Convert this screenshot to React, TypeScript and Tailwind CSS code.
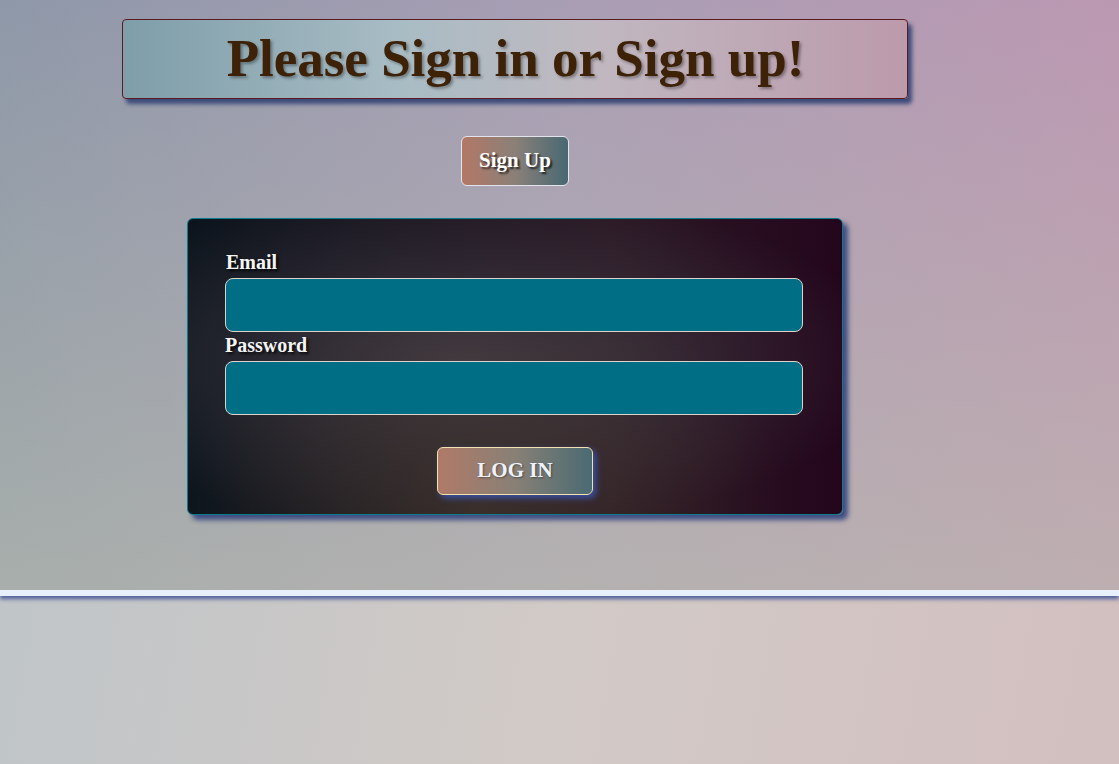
import { useState } from "react";

export default function App() {
  const [email, setEmail] = useState("");
  const [password, setPassword] = useState("");

  return (
    <div className="min-h-screen flex flex-col font-['Liberation_Serif','Times_New_Roman',serif] bg-[linear-gradient(100deg,#bcc4c8_0%,#d2cac6_55%,#d2bfbf_100%)]">
      <section className="relative z-10 h-[596px] border-b-[6px] border-[#e8f0fc] shadow-[0_3px_4px_#4f5f9c] bg-[linear-gradient(to_bottom,rgba(0,0,0,0)_0%,rgba(192,196,174,0.5)_100%),linear-gradient(to_right,#8e98a8_0%,#a89eb4_50%,#bb98b2_100%)]">
        <div className="w-[1030px] flex flex-col items-center pt-[19px]">
          <div className="w-[786px] h-[80px] flex items-center justify-center rounded-[4px] border border-[#5a1a20] bg-[linear-gradient(to_right,#7e9ea9_0%,#a8bcc4_35%,#c0b8c0_60%,#bc9aab_100%)] shadow-[4px_5px_4px_#3d4b7a]">
            <h1 className="text-[53px] leading-[60px] font-bold text-[#3d2208] [text-shadow:2px_2px_3px_rgba(0,0,0,0.35)] pb-[2px] pl-[1px]">
              Please Sign in or Sign up!
            </h1>
          </div>

          <button className="mt-[37px] w-[108px] h-[50px] rounded-[6px] border border-[#e4e4ec] bg-[linear-gradient(to_right,#b27866_0%,#8a8078_50%,#486872_100%)] text-white text-[21px] font-bold [text-shadow:2px_2px_2px_rgba(0,0,0,0.7)]">
            Sign Up
          </button>

          <form
            onSubmit={(e) => e.preventDefault()}
            className="mt-[32px] w-[656px] h-[297px] rounded-[6px] border border-[#0a7c8c] shadow-[5px_5px_5px_#3e4d82] pl-[37px] pt-[32px] bg-[radial-gradient(ellipse_at_45%_100%,rgba(72,60,46,0.6)_0%,rgba(0,0,0,0)_60%),radial-gradient(ellipse_at_42%_48%,rgba(64,58,68,0.95)_0%,rgba(0,0,0,0)_80%),linear-gradient(to_right,#0b141c_0%,#2a1824_65%,#24061c_100%)]"
          >
            <label className="block text-[20px] leading-[23px] font-bold text-[#f4f4f4] [text-shadow:2px_2px_3px_rgba(0,0,0,0.9)] pl-[1px] mb-[4px]">
              Email
            </label>
            <input
              type="email"
              value={email}
              onChange={(e) => setEmail(e.target.value)}
              className="block w-[578px] h-[54px] rounded-[8px] border border-[#dcd4cc] bg-[#006f85] text-white px-3 outline-none"
            />
            <label className="block mt-[2px] text-[20px] leading-[23px] font-bold text-[#f4f4f4] [text-shadow:2px_2px_3px_rgba(0,0,0,0.9)] mb-[4px]">
              Password
            </label>
            <input
              type="password"
              value={password}
              onChange={(e) => setPassword(e.target.value)}
              className="block w-[578px] h-[54px] rounded-[8px] border border-[#dcd4cc] bg-[#006f85] text-white px-3 outline-none"
            />
            <div className="w-[578px] flex justify-center mt-[32px] pl-[2px]">
              <button
                type="submit"
                className="w-[156px] h-[48px] rounded-[6px] border border-[#f2e2b0] bg-[linear-gradient(to_right,#b07a68_0%,#888076_50%,#4a6a72_100%)] text-[#eef2fa] text-[21px] font-bold shadow-[3px_3px_6px_#3a52a8] [text-shadow:1px_1px_2px_rgba(0,0,0,0.4)]"
              >
                LOG IN
              </button>
            </div>
          </form>
        </div>
      </section>
      <div className="flex-1" />
    </div>
  );
}
